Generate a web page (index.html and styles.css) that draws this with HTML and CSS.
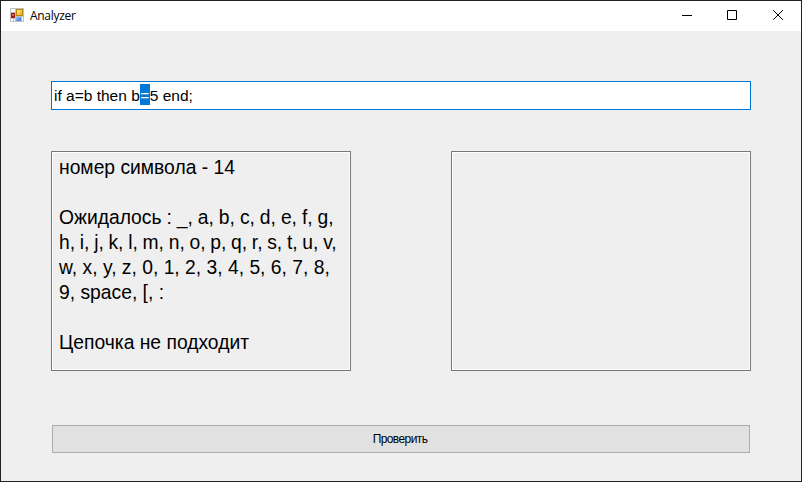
FILE: index.html
```html
<!DOCTYPE html>
<html lang="ru">
<head>
<meta charset="utf-8">
<title>Analyzer</title>
<link rel="stylesheet" href="styles.css">
</head>
<body>
<div class="window">
  <header class="titlebar">
    <svg class="app-icon" width="14" height="14" viewBox="0 0 14 14" shape-rendering="crispEdges">
      <defs>
        <linearGradient id="gold" x2="1" y2="1"><stop stop-color="#ffeb99"/><stop offset="1" stop-color="#f0ab00"/></linearGradient>
        <linearGradient id="blue" x2="1" y2="1"><stop stop-color="#9cc5fb"/><stop offset="1" stop-color="#3272d5"/></linearGradient>
      </defs>
      <path fill="#c1c1c1" d="M0 0h14v14H0z"/>
      <path fill="#fff" d="M1 1h4v3H1zM1 11h2v2H1zM4 11h1v2H4zM12 9h1v4h-1z"/>
      <path fill="#9f1c16" d="M1 5h4v5H1z"/>
      <path fill="#dc6058" d="M2 6h2v2H2z"/>
      <path fill="#b8860b" d="M6 1h7v7H6z"/>
      <path fill="url(#gold)" d="M7 2h5v5H7z"/>
      <path fill="url(#blue)" d="M6 9h5v4H6z"/>
    </svg>
    <h1 class="title">Analyzer</h1>
    <div class="controls">
      <svg width="46" height="30" viewBox="0 0 46 30"><path d="M18 14.5h10"/></svg>
      <svg width="46" height="30" viewBox="0 0 46 30"><path d="M17.500 9.500h9v9h-9z"/></svg>
      <svg width="46" height="30" viewBox="0 0 46 30"><path d="M17.200 9.200l9.600 9.600M26.800 9.200l-9.600 9.600"/></svg>
    </div>
  </header>
  <main class="form">
    <div class="input"><span class="input-text">if a=b then b<span class="selection">=</span>5 end;</span></div>
    <div class="panels">
      <div class="panel">
        <p>номер символа - 14</p>
        <p class="blank"></p>
        <p class="snug">Ожидалось : _, a, b, c, d, e, f, g,</p>
        <p class="tight">h, i, j, k, l, m, n, o, p, q, r, s, t, u, v,</p>
        <p>w, x, y, z, 0, 1, 2, 3, 4, 5, 6, 7, 8,</p>
        <p>9, space, [, :</p>
        <p class="blank"></p>
        <p>Цепочка не подходит</p>
      </div>
      <div class="panel"></div>
    </div>
    <button class="check">Проверить</button>
  </main>
</div>
</body>
</html>
```
FILE: styles.css
```css
* { box-sizing: border-box; }
body { margin: 0; overflow: hidden; }
.window {
  width: 802px;
  height: 482px;
  border: 1px solid #232125;
  background: #efefef;
  font-family: "Liberation Sans", Arial, sans-serif;
  color: #000;
}
.titlebar {
  display: flex;
  height: 30px;
  padding-left: 9px;
  background: #fff;
}
.app-icon { margin-top: 7px; }
.title {
  margin: 0 auto 0 6px;
  font: 12px/29px "Open Sans", sans-serif;
  letter-spacing: -0.3px;
}
.controls { display: flex; margin-right: -1px; }
.controls svg { fill: none; stroke: #000; stroke-width: 1; }
.form { padding: 50px; }
.input {
  height: 29px;
  border: 1px solid #0078d7;
  background: #fff;
  padding: 2px 0 0 2px;
  font-size: 15.5px;
  line-height: 23px;
  white-space: pre;
}
.selection {
  display: inline-block;
  width: 10px;
  height: 21px;
  line-height: 23px;
  text-align: center;
  vertical-align: top;
  background: #0078d7;
  color: #fff;
}
.panels {
  display: flex;
  justify-content: space-between;
  margin-top: 41px;
}
.panel {
  width: 300px;
  height: 220px;
  border: 1px solid #787878;
  box-shadow: inset 0 0 0 1px #fff;
  padding: 3px 0 0 7px;
  font-size: 19.3px;
  line-height: 25px;
  white-space: nowrap;
}
.panel p { margin: 0; height: 25px; }
.panel .snug { word-spacing: -0.4px; }
.panel .tight { word-spacing: -0.65px; }
.check {
  display: block;
  width: 698px;
  height: 28px;
  margin: 54px 1px 0;
  padding: 0 2px 0 0;
  border: 1px solid #adadad;
  background: #e1e1e1;
  font: 12px/26px "Liberation Sans", Arial, sans-serif;
  letter-spacing: -0.6px;
  color: #000;
}
```
